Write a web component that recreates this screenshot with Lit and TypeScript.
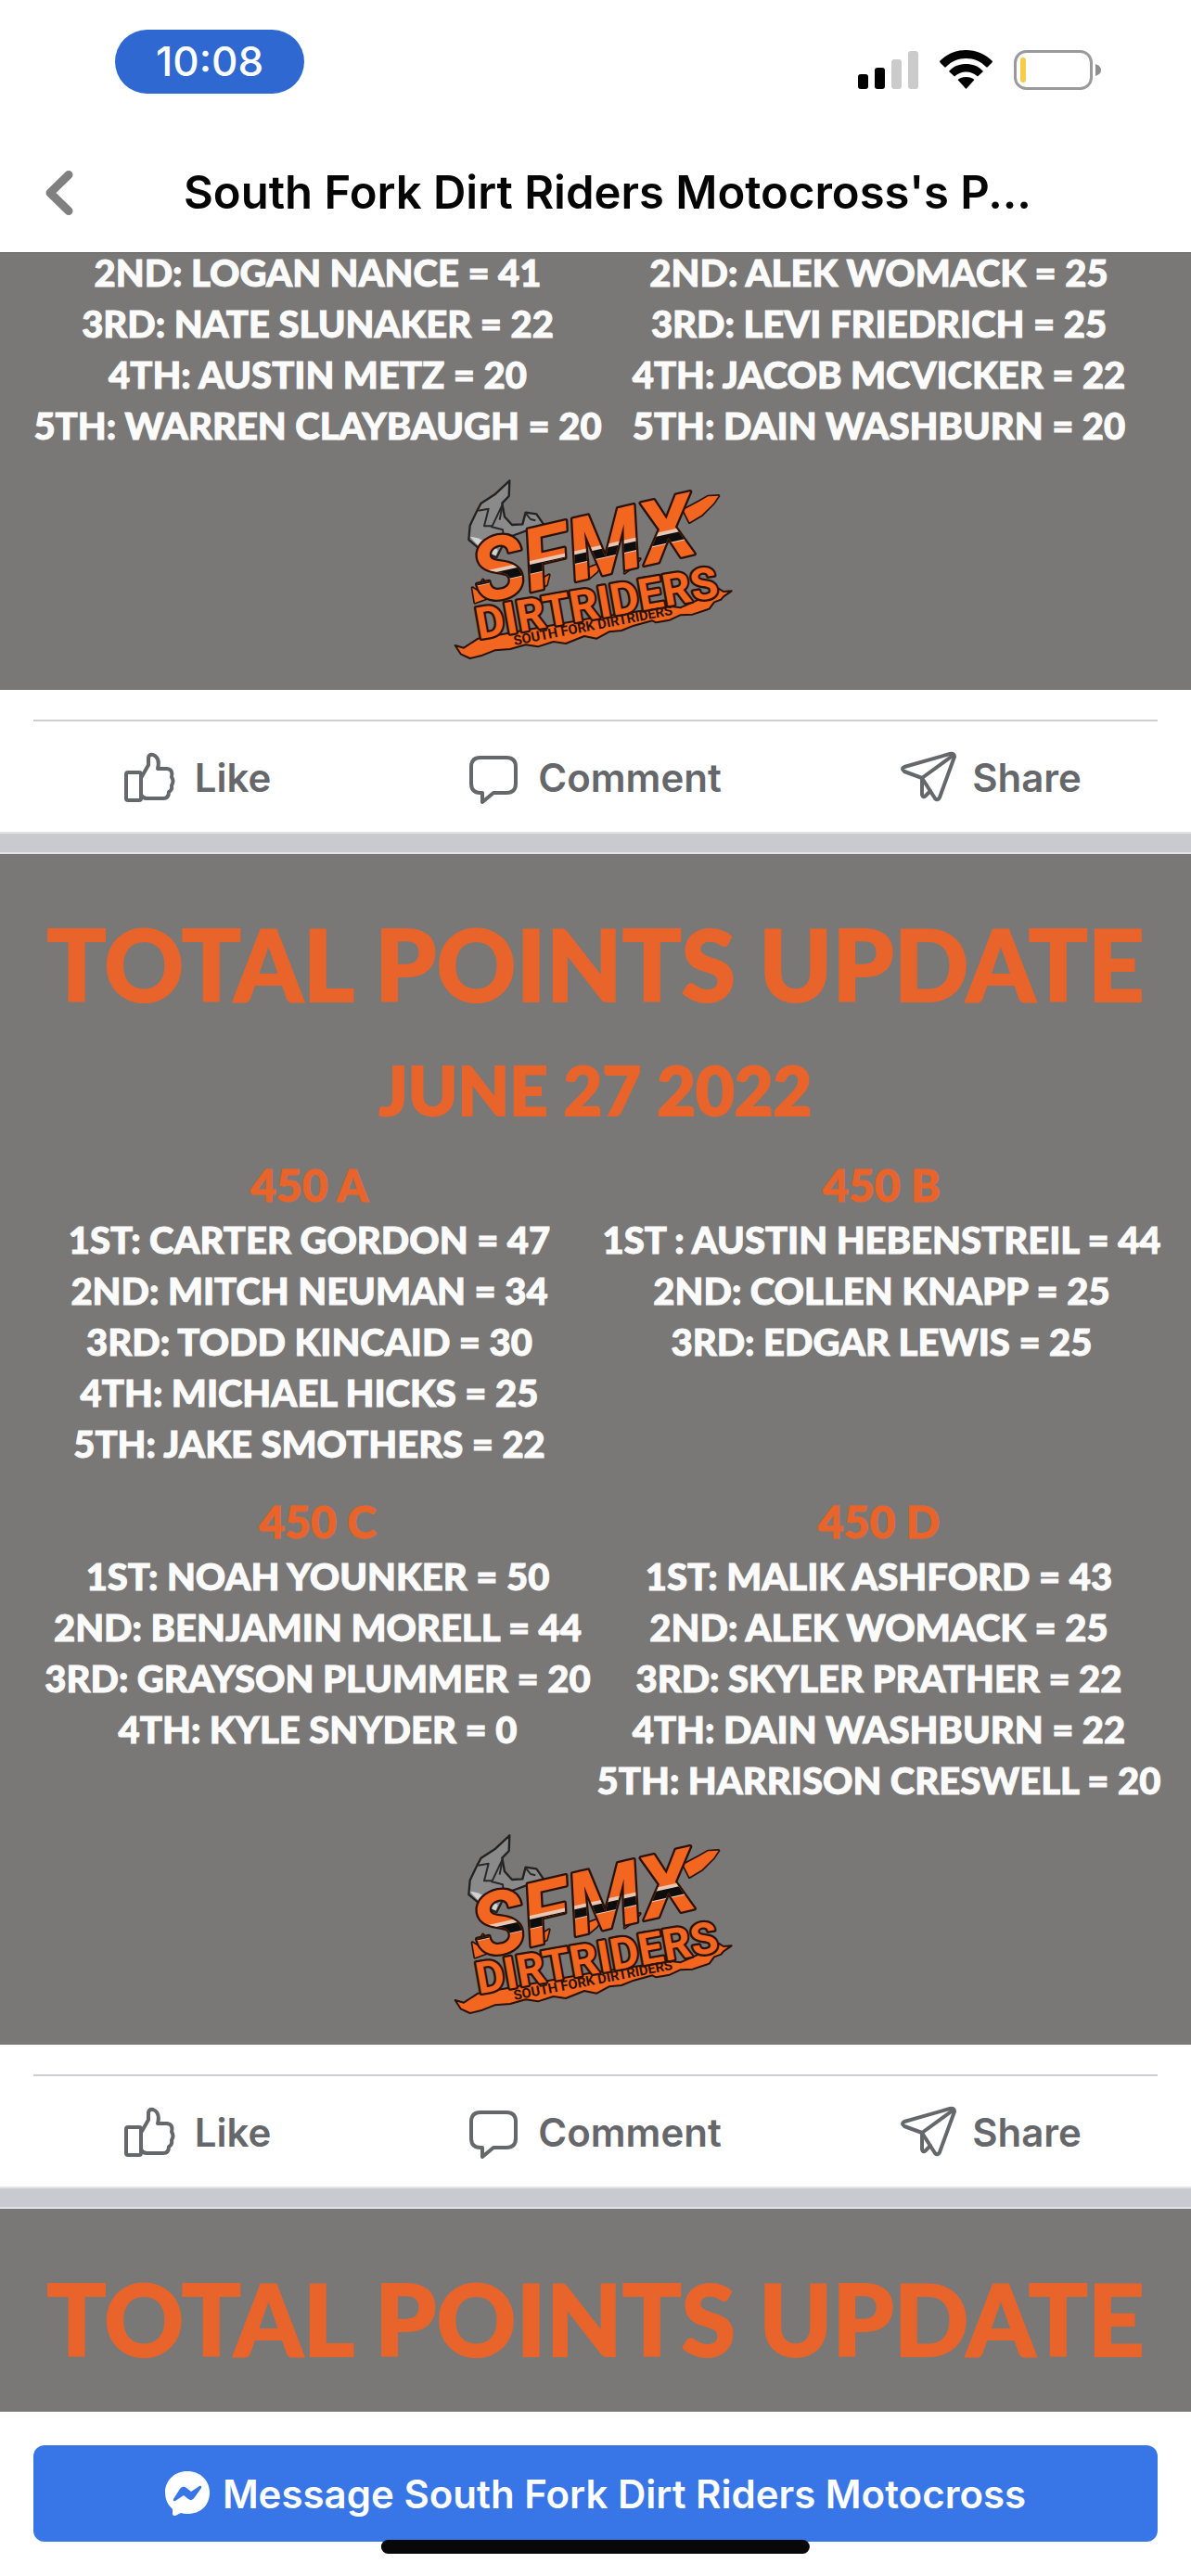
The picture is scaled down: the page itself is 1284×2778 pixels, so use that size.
import { LitElement, html, css, svg } from "lit";
import { customElement, property } from "lit/decorators.js";

interface Standing {
  name: string;
  rows: string[];
}

const topRow: Standing[] = [
  {
    name: "450 A",
    rows: [
      "1ST: CARTER GORDON = 47",
      "2ND: MITCH NEUMAN = 34",
      "3RD: TODD KINCAID = 30",
      "4TH: MICHAEL HICKS = 25",
      "5TH: JAKE SMOTHERS = 22",
    ],
  },
  {
    name: "450 B",
    rows: [
      "1ST : AUSTIN HEBENSTREIL = 44",
      "2ND: COLLEN KNAPP = 25",
      "3RD: EDGAR LEWIS = 25",
    ],
  },
];

const bottomRow: Standing[] = [
  {
    name: "450 C",
    rows: [
      "1ST: NOAH YOUNKER = 50",
      "2ND: BENJAMIN MORELL = 44",
      "3RD: GRAYSON PLUMMER = 20",
      "4TH: KYLE SNYDER = 0",
    ],
  },
  {
    name: "450 D",
    rows: [
      "1ST: MALIK ASHFORD = 43",
      "2ND: ALEK WOMACK = 25",
      "3RD: SKYLER PRATHER = 22",
      "4TH: DAIN WASHBURN = 22",
      "5TH: HARRISON CRESWELL = 20",
    ],
  },
];

const previousRow: Standing[] = [
  {
    name: "",
    rows: [
      "2ND: LOGAN NANCE = 41",
      "3RD: NATE SLUNAKER = 22",
      "4TH: AUSTIN METZ = 20",
      "5TH: WARREN CLAYBAUGH = 20",
    ],
  },
  {
    name: "",
    rows: [
      "2ND: ALEK WOMACK = 25",
      "3RD: LEVI FRIEDRICH = 25",
      "4TH: JACOB MCVICKER = 22",
      "5TH: DAIN WASHBURN = 20",
    ],
  },
];

@customElement("club-logo")
export class ClubLogo extends LitElement {
  static styles = css`
    :host {
      display: block;
      width: 340px;
    }
    .art {
      display: block;
      width: 100%;
      overflow: visible;
    }
    .race {
      font: italic 700 280px Roboto, sans-serif;
    }
    .riders {
      font: 700 142px Roboto, sans-serif;
    }
    .club {
      font: 700 44px Roboto, sans-serif;
    }
  `;

  render() {
    return html`<svg class="art" viewBox="6 0 1020 690" role="img" aria-label="SFMX Dirtriders">
      <defs>
        <clipPath id="letters">
          <text class="race" transform="translate(142 452) rotate(-13)">SFMX</text>
        </clipPath>
      </defs>
      <path
        d="M238 55 L236 105 L214 128 L222 172 L246 198 L280 196 L290 158 L325 163 L348 196 L300 214 L246 234 L214 268 L196 304 L150 284 L106 246 L110 200 L134 150 L146 128 L190 100 Z"
        fill="#8a8a8a" stroke="#222" stroke-width="7" stroke-linejoin="round"
      />
      <path d="M110 236 Q150 240 200 280 L194 298 L150 280 Z" fill="#d2d2d2" />
      <path
        d="M136 152 L170 146 L156 202 L182 202 L216 130 M216 130 L206 182 M178 204 L216 214 L220 244 M290 160 L306 180 L322 184"
        fill="none" stroke="#292929" stroke-width="6" stroke-linejoin="round"
      />
      <path
        d="M62 588 L90 596 L136 566 L500 500 L762 462 L790 466 L850 440 L886 432 L914 404 L930 414 L956 412 L930 430 L922 440 L900 448 L884 470 L830 488 L790 490 L756 506 L712 514 L700 508 L640 524 L600 540 L560 544 L520 566 L480 558 L420 582 L380 576 L330 592 L290 586 L240 600 L190 604 L150 620 L110 630 L80 616 Z"
        fill="#f2661f" stroke="#2a1208" stroke-width="6" stroke-linejoin="round"
      />
      <g fill="#f2661f" stroke="#2a1208" stroke-linejoin="round" paint-order="stroke">
        <text class="riders" stroke-width="14" transform="translate(138 568) rotate(-10)">DIRTRIDERS</text>
        <path
          d="M126 450 L118 402 L134 412 L152 376 L164 392 L160 410 L210 420 Z M320 412 L326 384 L366 360 L358 392 Z M494 372 L488 340 L540 320 L520 350 Z M610 354 L616 320 L660 308 L640 332 Z M800 150 L852 122 L880 106 L914 104 L898 128 L860 166 L820 190 Z"
          stroke-width="10"
        />
        <text class="race" stroke-width="14" transform="translate(142 452) rotate(-13)">SFMX</text>
      </g>
      <g clip-path="url(#letters)">
        <path d="M100 360 L920 178 V222 L100 404 Z" fill="#e9c7b5" />
        <path d="M100 372 L920 190 V218 L100 402 Z" fill="#0d0d0d" />
      </g>
      <text class="club" fill="#2a1208" transform="translate(254 588) rotate(-11)">SOUTH FORK DIRTRIDERS</text>
    </svg>`;
  }
}

@customElement("points-photo")
export class PointsPhoto extends LitElement {
  @property() heading = "";
  @property() date = "";
  @property({ attribute: false }) groups: Standing[][] = [];
  @property({ type: Boolean }) logo = false;

  static styles = css`
    :host {
      display: block;
      background: #797876;
      color: #fbfbfb;
      font-family: Lato, "Open Sans", sans-serif;
      font-weight: 900;
    }
    .heading,
    .date,
    .name {
      margin: 0;
      color: #e8642b;
      text-align: center;
      white-space: nowrap;
      font-weight: 900;
    }
    .heading {
      padding-top: 68px;
      font-size: 106px;
      line-height: 100px;
      -webkit-text-stroke: 2px currentColor;
    }
    .date {
      margin-top: 56px;
      margin-bottom: 45px;
      font-size: 72px;
      line-height: 60px;
      -webkit-text-stroke: 2px currentColor;
    }
    .group {
      display: grid;
      grid-template-columns: 1fr 1fr;
      padding: 0 34px 0 40px;
    }
    .group.first {
      padding: 0 25px;
      margin-bottom: 34px;
    }
    .column {
      display: flex;
      flex-direction: column;
      align-items: center;
      min-width: 0;
    }
    .name {
      margin-bottom: 10px;
      font-size: 48px;
      line-height: 56px;
      -webkit-text-stroke: 1px currentColor;
    }
    .rows {
      margin: 0;
      padding: 0;
      list-style: none;
      display: flex;
      flex-direction: column;
      align-items: center;
      gap: 12px;
      font-size: 40px;
      line-height: 43px;
      white-space: nowrap;
      -webkit-text-stroke: 1px currentColor;
    }
    .logo {
      margin: 0 auto;
      padding: 19px 0 14px;
    }
  `;

  render() {
    return html`
      ${this.heading ? html`<h2 class="heading">${this.heading}</h2>` : null}
      ${this.date ? html`<p class="date">${this.date}</p>` : null}
      ${this.groups.map(
        (group, i) => html`<div class="group ${i < this.groups.length - 1 ? "first" : ""}">
          ${group.map(
            (s) => html`<section class="column">
              ${s.name ? html`<h3 class="name">${s.name}</h3>` : null}
              <ul class="rows">
                ${s.rows.map((r) => html`<li>${r}</li>`)}
              </ul>
            </section>`
          )}
        </div>`
      )}
      ${this.logo ? html`<club-logo class="logo"></club-logo>` : null}
    `;
  }
}

const likeIcon = svg`
  <rect x="2" y="22" width="16" height="30" rx="2"/>
  <path d="M18 28 L26 14 V6 Q27 2 31 3 Q39 6 36 18 H46 Q53 19 51 27 Q54 31 51 36 Q52 41 48 43 Q48 50 42 50 H24 Q20 50 18 46"/>`;
const commentIcon = svg`
  <path d="M14 6 H42 Q52 6 52 16 V34 Q52 44 42 44 H28 L16 54 V44 H14 Q4 44 4 34 V16 Q4 6 14 6 Z"/>`;
const shareIcon = svg`
  <path d="M52 2 L3 16 Q-1 18 3 21 L22 28 L36 50 Q39 53 41 49 L57 5 Q57 1 52 2 Z"/>
  <path d="M22 28 L55 4 M22 28 V46 Q23 50 26 47 L31 42"/>`;

@customElement("post-actions")
export class PostActions extends LitElement {
  static styles = css`
    :host {
      display: block;
      padding-top: 32px;
      background: #fff;
    }
    .bar {
      display: grid;
      grid-template-columns: 1fr 1fr 1fr;
      height: 119px;
    }
    .rule {
      height: 2px;
      margin: 0 36px;
      border: 0;
      background: #ccced1;
    }
    .action {
      display: flex;
      align-items: center;
      justify-content: center;
      gap: 18px;
      padding: 2px 2px 0 0;
      border: 0;
      background: none;
      color: #65676b;
      font: 600 42px Inter, sans-serif;
    }
    .icon {
      width: 58px;
      height: 56px;
      overflow: visible;
      fill: none;
      stroke: currentColor;
      stroke-width: 4;
      stroke-linejoin: round;
      stroke-linecap: round;
    }
    .band {
      height: 20px;
      border: solid #e2e3e8;
      border-width: 2px 0;
      background: #c9cad0;
    }
  `;

  render() {
    const items = [
      { label: "Like", icon: likeIcon },
      { label: "Comment", icon: commentIcon },
      { label: "Share", icon: shareIcon },
    ];
    return html`
      <hr class="rule" />
      <div class="bar">
        ${items.map(
          (a) => html`<button class="action" type="button">
            <svg class="icon" viewBox="0 0 58 56" aria-hidden="true">${a.icon}</svg>
            <span>${a.label}</span>
          </button>`
        )}
      </div>
      <div class="band"></div>
    `;
  }
}

@customElement("app-root")
export class AppRoot extends LitElement {
  static styles = css`
    :host {
      display: flex;
      flex-direction: column;
      min-height: 100vh;
      background: #fff;
      font-family: Inter, sans-serif;
    }
    .status {
      display: flex;
      align-items: flex-start;
      justify-content: space-between;
      height: 111px;
      padding: 32px 96px 0 124px;
    }
    .clock {
      padding: 0 44px;
      border-radius: 35px;
      background: #2f68d0;
      color: #fff;
      font-size: 44px;
      font-weight: 500;
      line-height: 69px;
    }
    .indicators {
      display: flex;
      gap: 23px;
      padding-top: 21px;
    }
    .glyph {
      display: block;
      height: 44px;
    }
    .nav {
      display: flex;
      align-items: center;
      height: 129px;
      padding: 0 54px 0 44px;
      border-bottom: 1px solid #565856;
    }
    .back {
      display: flex;
      padding: 0;
      border: 0;
      background: none;
    }
    .title {
      flex: 1;
      margin: 0;
      color: #050505;
      font-size: 49px;
      font-weight: 600;
      text-align: center;
      white-space: nowrap;
    }
    .feed {
      display: flex;
      flex: 1;
      flex-direction: column;
    }
    .photo,
    .actions {
      flex: none;
    }
    .rest {
      flex: 1;
      min-height: 218px;
    }
    .footer {
      position: relative;
      padding: 36px 36px 37px;
      border-top: 1px solid #8d9099;
    }
    .message {
      display: flex;
      align-items: center;
      justify-content: center;
      gap: 14px;
      width: 100%;
      height: 104px;
      padding: 0;
      border: 0;
      border-radius: 12px;
      background: #3876e8;
      color: #fff;
      font: 600 42px Inter, sans-serif;
      white-space: nowrap;
    }
    .home {
      position: absolute;
      bottom: 24px;
      left: 50%;
      width: 36%;
      height: 15px;
      border-radius: 8px;
      background: #080808;
      transform: translateX(-50%);
    }
  `;

  render() {
    return html`
      <header>
        <div class="status">
          <time class="clock">10:08</time>
          <div class="indicators">
            <svg class="glyph" width="65" viewBox="0 0 65 44" role="img" aria-label="Signal">
              <rect y="27" width="11" height="16" rx="3" />
              <rect x="18" y="20" width="11" height="23" rx="3" />
              <rect x="36" y="11" width="11" height="32" rx="3" fill="#cbcbcb" />
              <rect x="54" y="2" width="11" height="41" rx="3" fill="#cbcbcb" />
            </svg>
            <svg class="glyph" width="57" viewBox="0 0 57 44" role="img" aria-label="Wi-Fi">
              <path d="M28.5 1 C39 1 49 5 57 13 Q57 14 56 15 L52 19 Q51 20 50 19 C44 13 37 10 28.5 10 C20 10 13 13 7 19 Q6 20 5 19 L1 15 Q0 14 0 13 C8 5 18 1 28.5 1 Z" />
              <path d="M28.5 16 C35 16 42 18 47 24 L41 29.5 C37 26 33 24.5 28.5 24.5 C24 24.5 20 26 16 29.5 L10 24 C15 18 22 16 28.5 16 Z" />
              <path d="M28.5 30 Q34 30 37.5 33 L28.5 43 L19.5 33 Q23 30 28.5 30 Z" />
            </svg>
            <svg class="glyph" width="95" viewBox="0 0 95 44" role="img" aria-label="Battery low">
              <rect x="1.5" y="2.5" width="82" height="40" rx="12" fill="none" stroke="#9a9a9a" stroke-width="3" />
              <rect x="7" y="9" width="6" height="27" rx="3" fill="#f6cd46" />
              <path d="M88 16 Q94 18 94 22.5 Q94 27 88 29 Z" fill="#8e8e8e" />
            </svg>
          </div>
        </div>
        <nav class="nav">
          <button class="back" type="button" aria-label="Back">
            <svg width="36" height="52" viewBox="0 0 36 52" aria-hidden="true">
              <path d="M30 6.5 L10 26 L30 45.5" fill="none" stroke="#808080" stroke-width="9" stroke-linecap="round" stroke-linejoin="round" />
            </svg>
          </button>
          <h1 class="title">South Fork Dirt Riders Motocross's P...</h1>
        </nav>
      </header>
      <main class="feed">
        <points-photo class="photo" .groups=${[previousRow]} .logo=${true}></points-photo>
        <post-actions class="actions"></post-actions>
        <points-photo
          class="photo"
          heading="TOTAL POINTS UPDATE"
          date="JUNE 27 2022"
          .groups=${[topRow, bottomRow]}
          .logo=${true}
        ></points-photo>
        <post-actions class="actions"></post-actions>
        <points-photo class="rest" heading="TOTAL POINTS UPDATE"></points-photo>
      </main>
      <footer class="footer">
        <button class="message" type="button">
          <svg width="48" height="48" viewBox="0 0 48 48" aria-hidden="true">
            <path d="M24 0 C38 0 48 10 48 23 C48 37 38 46 24 46 Q20 46 17 45 L11 48 Q8 48 8 46 V41 Q0 34 0 23 C0 10 10 0 24 0 Z" fill="#fff" />
            <path d="M9 30 L16 19 Q19 15 23 18 L28 22 L37 16 Q40 15 39 18 L32 28 Q29 33 25 30 L20 26 L11 32 Q8 33 9 30 Z" fill="#3876e8" />
          </svg>
          <span>Message South Fork Dirt Riders Motocross</span>
        </button>
        <div class="home"></div>
      </footer>
    `;
  }
}
